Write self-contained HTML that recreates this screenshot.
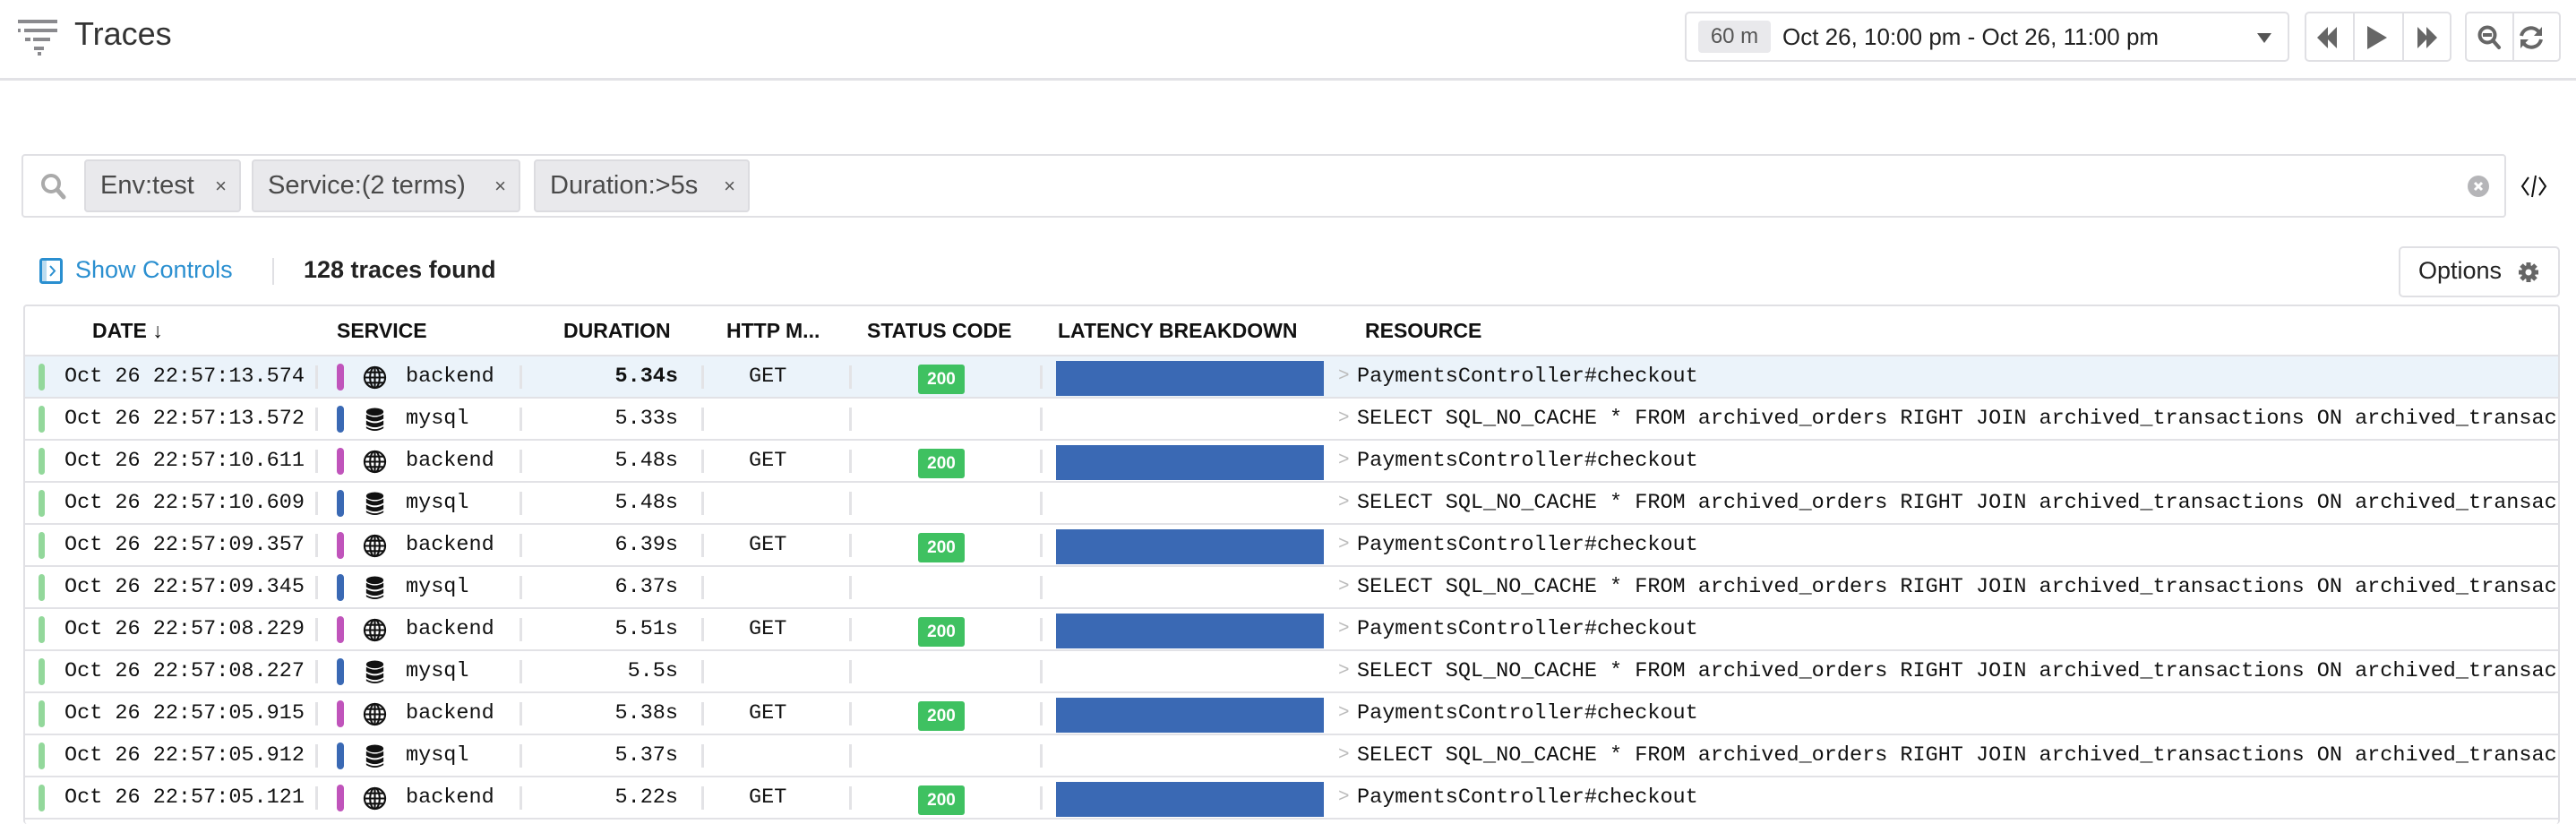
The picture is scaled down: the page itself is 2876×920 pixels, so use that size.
<!DOCTYPE html>
<html><head><meta charset="utf-8"><style>
*{box-sizing:border-box;margin:0;padding:0}
body{width:2876px;height:916px;overflow:hidden;background:#fff;font-family:"Liberation Sans",sans-serif;color:#1c1c1c;position:relative}
.a{position:absolute}
.hdr{left:0;top:0;width:2876px;height:90px;border-bottom:3px solid #e2e2e6}
.box{border:2px solid #e0e0e4;border-radius:5px;background:#fff}
.chip{position:absolute;top:178px;height:59px;background:#e9e9ec;border:2px solid #dcdce0;border-radius:4px;font-size:29px;color:#4a4a4a;line-height:55px;padding-left:16px}
.chip b{font-weight:normal;font-size:22px;position:absolute;right:14px;top:0;color:#555}
.th{position:absolute;top:352px;font-size:23px;font-weight:bold;line-height:34px;color:#111}
.row{position:absolute;left:28px;width:2828px;height:47px;border-bottom:2px solid #e2e2e6;font-family:"Liberation Mono",monospace;font-size:23.5px;line-height:45px;color:#111;overflow:hidden;white-space:nowrap}
.row>*{position:absolute}
.g{left:15px;top:8px;width:7px;height:30px;border-radius:4px;background:#93d89b}
.dt{left:44px}
.sep{top:10px;width:3px;height:26px;background:#e3e3e6}
.sb{left:348px;top:8px;width:8px;height:30px;border-radius:4px}
.ic{left:377px;top:10px}
.sv{left:425px}
.du{right:2099px;text-align:right}
.get{left:808px}
.st{left:997px;top:9px;width:52px;height:33px;background:#3fc161;border-radius:3px;color:#fff;font-family:"Liberation Sans",sans-serif;font-weight:bold;font-size:19px;line-height:33px;text-align:center}
.lb{left:1151px;top:5px;width:299px;height:39px;background:#3a69b4}
.gt{left:1466px;color:#bbb;font-size:21px}
.rs{left:1487px;width:1340px;overflow:hidden}
</style></head><body>
<div class="a hdr"></div>
<svg class="a" style="left:20px;top:22px" width="44" height="40" viewBox="0 0 44 40"><g fill="#8a8a8e"><rect x="0" y="0" width="44" height="4"/><rect x="0" y="10" width="3" height="4"/><rect x="7" y="10" width="37" height="4"/><rect x="8" y="20" width="6" height="4"/><rect x="17" y="20" width="19" height="4"/><rect x="18" y="30" width="11" height="4"/><rect x="22" y="36" width="4" height="4"/></g></svg>
<div class="a" style="left:83px;top:17px;font-size:36px;color:#333">Traces</div>

<div class="a box" style="left:1881px;top:13px;width:675px;height:56px"></div>
<div class="a" style="left:1896px;top:23px;width:81px;height:36px;background:#e9e9ec;border-radius:4px;font-size:24px;color:#555;text-align:center;line-height:36px">60 m</div>
<div class="a" style="left:1990px;top:23px;font-size:26px;line-height:36px;color:#222">Oct 26, 10:00 pm - Oct 26, 11:00 pm</div>
<div class="a" style="left:2520px;top:37px;width:0;height:0;border-left:8px solid transparent;border-right:8px solid transparent;border-top:11px solid #555"></div>
<div class="a box" style="left:2573px;top:13px;width:164px;height:56px"></div>
<div class="a" style="left:2627px;top:15px;width:2px;height:52px;background:#e0e0e4"></div>
<div class="a" style="left:2682px;top:15px;width:2px;height:52px;background:#e0e0e4"></div>
<svg class="a" style="left:2585px;top:29px" width="140" height="26" viewBox="0 0 140 26"><g fill="#666"><path d="M2 13L14 1V25Z M12 13L24 1V25Z"/><path d="M58 0L80 13L58 26Z"/><path d="M114 1L126 13L114 25Z M124 1L136 13L124 25Z"/></g></svg>
<div class="a box" style="left:2752px;top:13px;width:107px;height:56px"></div>
<div class="a" style="left:2805px;top:15px;width:2px;height:52px;background:#e0e0e4"></div>
<svg class="a" style="left:2766px;top:28px" width="80" height="28" viewBox="0 0 80 28"><g fill="none" stroke="#666" stroke-width="4"><circle cx="11" cy="11" r="8.5"/><path d="M17 17L24 25" stroke-linecap="round"/><path d="M6 11H16"/><path d="M49 12A11 11 0 0 1 68 7M71 16A11 11 0 0 1 52 21"/></g><g fill="#666"><path d="M72 2V12H63Z"/><path d="M48 26V16H57Z"/></g></svg>

<div class="a box" style="left:24px;top:172px;width:2774px;height:71px;border-radius:4px"></div>
<svg class="a" style="left:45px;top:193px" width="30" height="32" viewBox="0 0 30 32"><circle cx="12" cy="12" r="9" fill="none" stroke="#aaa" stroke-width="4"/><path d="M19 19L26 27" stroke="#aaa" stroke-width="5" stroke-linecap="round"/></svg>
<div class="chip" style="left:94px;width:175px">Env:test<b>×</b></div>
<div class="chip" style="left:281px;width:300px">Service:(2 terms)<b>×</b></div>
<div class="chip" style="left:596px;width:241px">Duration:&gt;5s<b>×</b></div>
<svg class="a" style="left:2755px;top:196px" width="24" height="24" viewBox="0 0 24 24"><circle cx="12" cy="12" r="12" fill="#b5b5b8"/><path d="M8 8L16 16M16 8L8 16" stroke="#fff" stroke-width="3"/></svg>
<svg class="a" style="left:2814px;top:194px" width="30" height="28" viewBox="0 0 30 28"><path d="M9 4L2 14L9 24M21 4L28 14L21 24M17 2L13 26" fill="none" stroke="#111" stroke-width="2"/></svg>

<svg class="a" style="left:44px;top:288px" width="26" height="29" viewBox="0 0 26 29"><rect x="1.5" y="1.5" width="23" height="26" rx="2" fill="none" stroke="#2a8fd0" stroke-width="3"/><path d="M3 3L8 3L8 26L3 26Z" fill="#bcdcf0"/><path d="M12 9L17 14.5L12 20" fill="none" stroke="#2a8fd0" stroke-width="2"/></svg>
<div class="a" style="left:84px;top:286px;font-size:27px;color:#2a8fd0">Show Controls</div>
<div class="a" style="left:304px;top:288px;width:2px;height:30px;background:#e0e0e4"></div>
<div class="a" style="left:339px;top:286px;font-size:27px;font-weight:bold;color:#222">128 traces found</div>
<div class="a box" style="left:2678px;top:275px;width:180px;height:57px"></div>
<div class="a" style="left:2700px;top:287px;font-size:27px;color:#222">Options</div>
<svg class="a" style="left:2811px;top:292px" width="24" height="24" viewBox="0 0 24 24"><g fill="#666"><circle cx="12" cy="12" r="8"/><g stroke="#666" stroke-width="5"><path d="M12 1V23M1 12H23M4 4L20 20M20 4L4 20"/></g></g><circle cx="12" cy="12" r="3.5" fill="#fff"/></svg>

<div class="a" style="left:26px;top:340px;width:2832px;height:580px;border:2px solid #e0e0e4;border-radius:4px;border-bottom:none"></div>
<div class="a" style="left:28px;top:396px;width:2828px;height:2px;background:#e2e2e6"></div>
<div class="th" style="left:103px">DATE ↓</div>
<div class="th" style="left:376px">SERVICE</div>
<div class="th" style="left:629px">DURATION</div>
<div class="th" style="left:811px">HTTP M...</div>
<div class="th" style="left:968px">STATUS CODE</div>
<div class="th" style="left:1181px">LATENCY BREAKDOWN</div>
<div class="th" style="left:1524px">RESOURCE</div>

<svg width="0" height="0" style="position:absolute"><defs>
<symbol id="gl" viewBox="0 0 28 28"><g fill="none" stroke="#111" stroke-width="2.2"><circle cx="14" cy="14" r="12"/><ellipse cx="14" cy="14" rx="5.5" ry="12"/><path d="M14 2V26M2 14H26M4 8H24M4 20H24"/></g></symbol>
<symbol id="db" viewBox="0 0 28 28"><g fill="#111"><ellipse cx="14" cy="5" rx="10" ry="4.5"/><path d="M4 8Q14 14 24 8V13Q14 19 4 13Z"/><path d="M4 15Q14 21 24 15V20Q14 26 4 20Z"/><path d="M4 22Q14 28 24 22V24Q14 30 4 24Z"/></g></symbol>
</defs></svg>

<div class="row" style="top:398px;background:#ebf3fa"><i class="g"></i><span class="dt">Oct 26 22:57:13.574</span><i class="sep" style="left:324px"></i><i class="sb" style="background:#c054bb"></i><svg class="ic" width="27" height="27"><use href="#gl"/></svg><span class="sv">backend</span><i class="sep" style="left:552px"></i><span class="du" style="font-weight:bold">5.34s</span><i class="sep" style="left:755px"></i><span class="get">GET</span><i class="sep" style="left:920px"></i><span class="st">200</span><i class="sep" style="left:1133px"></i><i class="lb"></i><span class="gt">&gt;</span><span class="rs">PaymentsController#checkout</span></div>
<div class="row" style="top:445px"><i class="g"></i><span class="dt">Oct 26 22:57:13.572</span><i class="sep" style="left:324px"></i><i class="sb" style="background:#3a69b4"></i><svg class="ic" width="27" height="27"><use href="#db"/></svg><span class="sv">mysql</span><i class="sep" style="left:552px"></i><span class="du">5.33s</span><i class="sep" style="left:755px"></i><i class="sep" style="left:920px"></i><i class="sep" style="left:1133px"></i><span class="gt">&gt;</span><span class="rs">SELECT SQL_NO_CACHE * FROM archived_orders RIGHT JOIN archived_transactions ON archived_transactions.order_id = archived_orders.id</span></div>
<div class="row" style="top:492px"><i class="g"></i><span class="dt">Oct 26 22:57:10.611</span><i class="sep" style="left:324px"></i><i class="sb" style="background:#c054bb"></i><svg class="ic" width="27" height="27"><use href="#gl"/></svg><span class="sv">backend</span><i class="sep" style="left:552px"></i><span class="du">5.48s</span><i class="sep" style="left:755px"></i><span class="get">GET</span><i class="sep" style="left:920px"></i><span class="st">200</span><i class="sep" style="left:1133px"></i><i class="lb"></i><span class="gt">&gt;</span><span class="rs">PaymentsController#checkout</span></div>
<div class="row" style="top:539px"><i class="g"></i><span class="dt">Oct 26 22:57:10.609</span><i class="sep" style="left:324px"></i><i class="sb" style="background:#3a69b4"></i><svg class="ic" width="27" height="27"><use href="#db"/></svg><span class="sv">mysql</span><i class="sep" style="left:552px"></i><span class="du">5.48s</span><i class="sep" style="left:755px"></i><i class="sep" style="left:920px"></i><i class="sep" style="left:1133px"></i><span class="gt">&gt;</span><span class="rs">SELECT SQL_NO_CACHE * FROM archived_orders RIGHT JOIN archived_transactions ON archived_transactions.order_id = archived_orders.id</span></div>
<div class="row" style="top:586px"><i class="g"></i><span class="dt">Oct 26 22:57:09.357</span><i class="sep" style="left:324px"></i><i class="sb" style="background:#c054bb"></i><svg class="ic" width="27" height="27"><use href="#gl"/></svg><span class="sv">backend</span><i class="sep" style="left:552px"></i><span class="du">6.39s</span><i class="sep" style="left:755px"></i><span class="get">GET</span><i class="sep" style="left:920px"></i><span class="st">200</span><i class="sep" style="left:1133px"></i><i class="lb"></i><span class="gt">&gt;</span><span class="rs">PaymentsController#checkout</span></div>
<div class="row" style="top:633px"><i class="g"></i><span class="dt">Oct 26 22:57:09.345</span><i class="sep" style="left:324px"></i><i class="sb" style="background:#3a69b4"></i><svg class="ic" width="27" height="27"><use href="#db"/></svg><span class="sv">mysql</span><i class="sep" style="left:552px"></i><span class="du">6.37s</span><i class="sep" style="left:755px"></i><i class="sep" style="left:920px"></i><i class="sep" style="left:1133px"></i><span class="gt">&gt;</span><span class="rs">SELECT SQL_NO_CACHE * FROM archived_orders RIGHT JOIN archived_transactions ON archived_transactions.order_id = archived_orders.id</span></div>
<div class="row" style="top:680px"><i class="g"></i><span class="dt">Oct 26 22:57:08.229</span><i class="sep" style="left:324px"></i><i class="sb" style="background:#c054bb"></i><svg class="ic" width="27" height="27"><use href="#gl"/></svg><span class="sv">backend</span><i class="sep" style="left:552px"></i><span class="du">5.51s</span><i class="sep" style="left:755px"></i><span class="get">GET</span><i class="sep" style="left:920px"></i><span class="st">200</span><i class="sep" style="left:1133px"></i><i class="lb"></i><span class="gt">&gt;</span><span class="rs">PaymentsController#checkout</span></div>
<div class="row" style="top:727px"><i class="g"></i><span class="dt">Oct 26 22:57:08.227</span><i class="sep" style="left:324px"></i><i class="sb" style="background:#3a69b4"></i><svg class="ic" width="27" height="27"><use href="#db"/></svg><span class="sv">mysql</span><i class="sep" style="left:552px"></i><span class="du">5.5s</span><i class="sep" style="left:755px"></i><i class="sep" style="left:920px"></i><i class="sep" style="left:1133px"></i><span class="gt">&gt;</span><span class="rs">SELECT SQL_NO_CACHE * FROM archived_orders RIGHT JOIN archived_transactions ON archived_transactions.order_id = archived_orders.id</span></div>
<div class="row" style="top:774px"><i class="g"></i><span class="dt">Oct 26 22:57:05.915</span><i class="sep" style="left:324px"></i><i class="sb" style="background:#c054bb"></i><svg class="ic" width="27" height="27"><use href="#gl"/></svg><span class="sv">backend</span><i class="sep" style="left:552px"></i><span class="du">5.38s</span><i class="sep" style="left:755px"></i><span class="get">GET</span><i class="sep" style="left:920px"></i><span class="st">200</span><i class="sep" style="left:1133px"></i><i class="lb"></i><span class="gt">&gt;</span><span class="rs">PaymentsController#checkout</span></div>
<div class="row" style="top:821px"><i class="g"></i><span class="dt">Oct 26 22:57:05.912</span><i class="sep" style="left:324px"></i><i class="sb" style="background:#3a69b4"></i><svg class="ic" width="27" height="27"><use href="#db"/></svg><span class="sv">mysql</span><i class="sep" style="left:552px"></i><span class="du">5.37s</span><i class="sep" style="left:755px"></i><i class="sep" style="left:920px"></i><i class="sep" style="left:1133px"></i><span class="gt">&gt;</span><span class="rs">SELECT SQL_NO_CACHE * FROM archived_orders RIGHT JOIN archived_transactions ON archived_transactions.order_id = archived_orders.id</span></div>
<div class="row" style="top:868px"><i class="g"></i><span class="dt">Oct 26 22:57:05.121</span><i class="sep" style="left:324px"></i><i class="sb" style="background:#c054bb"></i><svg class="ic" width="27" height="27"><use href="#gl"/></svg><span class="sv">backend</span><i class="sep" style="left:552px"></i><span class="du">5.22s</span><i class="sep" style="left:755px"></i><span class="get">GET</span><i class="sep" style="left:920px"></i><span class="st">200</span><i class="sep" style="left:1133px"></i><i class="lb"></i><span class="gt">&gt;</span><span class="rs">PaymentsController#checkout</span></div>
</body></html>
